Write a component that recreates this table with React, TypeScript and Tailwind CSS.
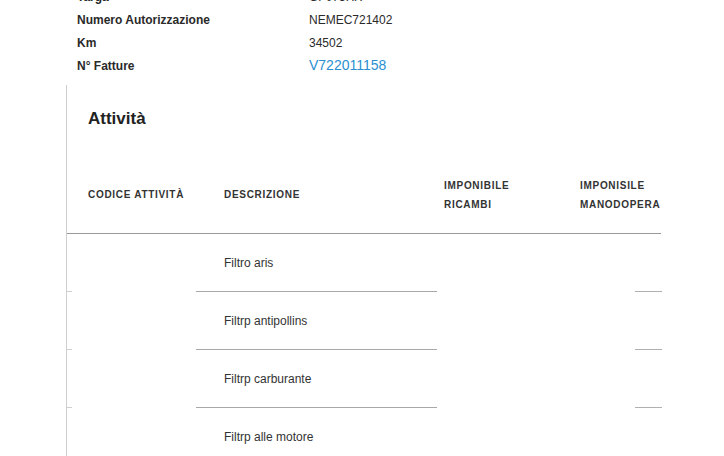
import React from "react";

const info = [
  { label: "Targa", value: "GF075HX" },
  { label: "Numero Autorizzazione", value: "NEMEC721402" },
  { label: "Km", value: "34502" },
  { label: "N° Fatture", value: "V722011158", link: true },
];

const rows = ["Filtro aris", "Filtrp antipollins", "Filtrp carburante", "Filtrp alle motore"];

export default function App() {
  return (
    <div
      className="w-[724px] h-[456px] overflow-hidden bg-white text-[#2a2a2a]"
      style={{ fontFamily: '"Liberation Sans", Arial, sans-serif' }}
    >
      <div className="mt-[-15px] pl-[77px]">
        {info.map((r) => (
          <div key={r.label} className="grid grid-cols-[232px_1fr] h-[23px] items-center">
            <div className="text-[12px] font-bold text-[#2a2a2a]">{r.label}</div>
            <div
              className={
                r.link ? "text-[14px] text-[#2b8fd0]" : "text-[12px] text-[#2a2a2a]"
              }
            >
              {r.value}
            </div>
          </div>
        ))}
      </div>

      <div className="ml-[66px] mt-[8px] w-[595px] border-l border-[#cfcfcf]">
        <div className="pl-[21px] pt-[22px] h-[46px] text-[17px] leading-[24px] font-bold text-[#222]">
          Attività
        </div>
        <div className="mt-[25px] h-[78px] grid grid-cols-[129px_241px_198px_27px] items-center border-b border-[#9a9a9a] text-[10px] font-bold tracking-[0.07em] text-[#333] leading-[19px]">
          <div className="pl-[21px] whitespace-nowrap">CODICE ATTIVITÀ</div>
          <div className="pl-[28px]">DESCRIZIONE</div>
          <div className="pl-[7px] pt-[1px]">
            IMPONIBILE
            <br />
            RICAMBI
          </div>
          <div className="ml-[-55px] pt-[1px] whitespace-nowrap">
            IMPONISILE
            <br />
            MANODOPERA
          </div>
        </div>
        {rows.map((d, i) => (
          <div key={d} className="grid grid-cols-[129px_241px_198px_27px] h-[58px]">
            <div className="flex flex-col justify-end">
              {i < rows.length - 1 && <div className="w-[5px] border-b border-[#cfcfcf]" />}
            </div>
            <div className="flex flex-col">
              <div className="flex-1 flex items-center pl-[28px] text-[12px] text-[#333]">{d}</div>
              {i < rows.length - 1 && <div className="border-b border-[#a8a8a8]" />}
            </div>
            <div />
            <div className="flex flex-col justify-end">
              {i < rows.length - 1 && <div className="border-b border-[#b0b0b0]" />}
            </div>
          </div>
        ))}
      </div>
    </div>
  );
}
